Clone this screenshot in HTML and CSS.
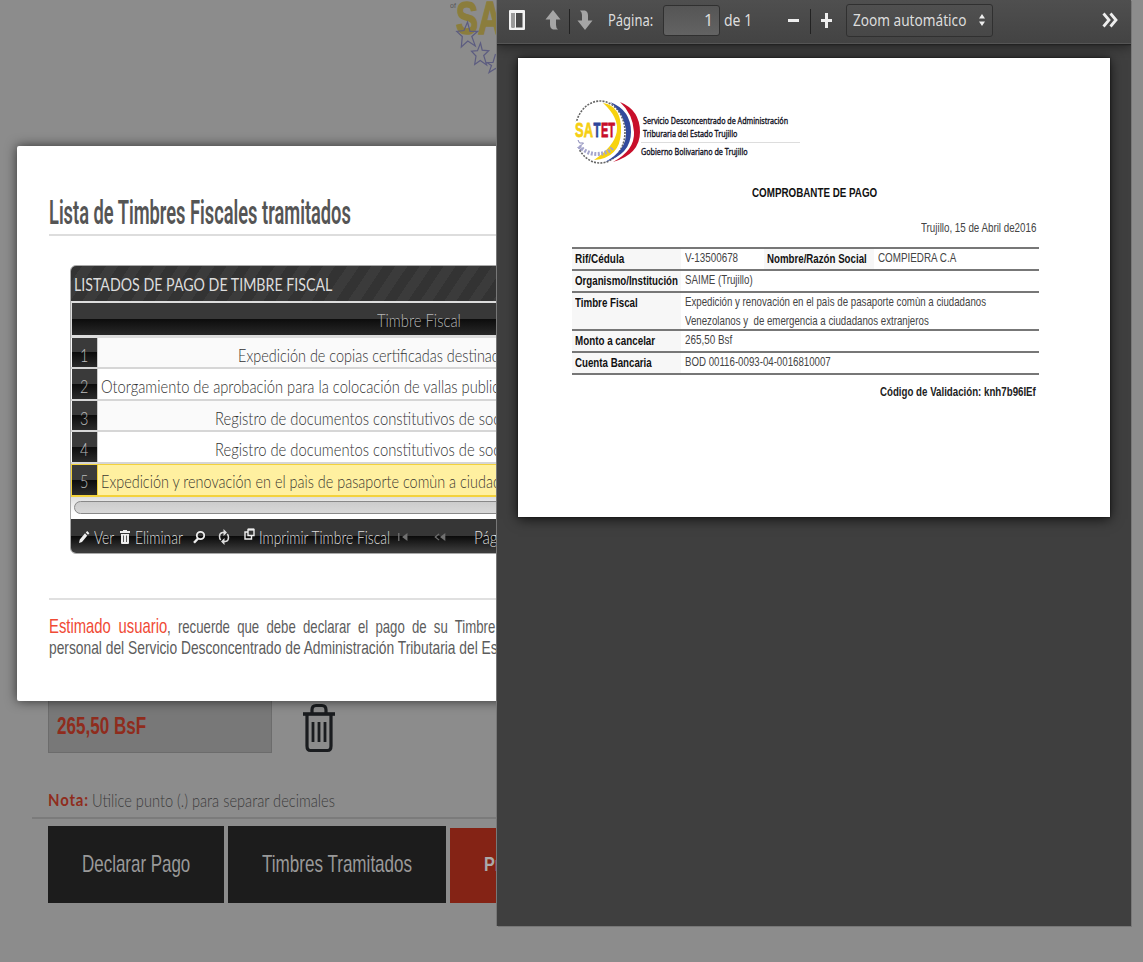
FILE: index.html
```html
<!DOCTYPE html>
<html lang="es">
<head>
<meta charset="utf-8">
<title>Timbres Fiscales</title>
<link rel="stylesheet" href="styles.css">
</head>
<body>
<div class="stage">
  <main class="page">
    <svg class="page-logo" viewBox="0 0 47 76" width="47" height="76">
      <text x="0" y="8" class="logo-tiny">of</text>
      <text x="6" y="34" class="logo-sa" textLength="46" lengthAdjust="spacingAndGlyphs">SA</text>
      <g fill="none" stroke="#5c5c80" stroke-width="1.2">
        <path d="M17.500 22l2.500 9.300h7.800l-6 5.200 3.500 9.500-7.500-5-6.500 6 1-10.500-5.500-5 7.200-1z"/>
        <path d="M30.500 43l1.700 7.200 6.500.6-5 4.700 3 9.500-6.500-4.500-5.500 4 1.300-8.500-4.500-4.800 6-.6z"/>
        <path d="M45.500 54l-2.500 8.500h-6l4.500 3-2.500 7 6.500-4 3 2"/>
      </g>
    </svg>
    <form class="form">
      <div class="amount-row">
        <div class="amount"><span class="fit" data-w="89">265,50 BsF</span></div>
        <svg class="trash" width="34" height="50" viewBox="0 0 34 50" fill="none" stroke="#1a1c1f">
          <path stroke-width="3.600" d="M1 11h32"/>
          <path stroke-width="3.200" d="M10 10V7q0-4.500 4-4.500h6q4 0 4 4.500v3M5 12v31q0 4.500 3.500 4.500h17q3.500 0 3.500-4.500V12"/>
          <path stroke-width="2.800" d="M11 19v20M17 19v20M23 19v20"/>
        </svg>
      </div>
      <p class="note"><b class="fit" data-w="41">Nota:</b><span class="fit" data-w="243">Utilice punto (.) para separar decimales</span></p>
      <div class="actions">
        <a class="btn btn-pago"><span class="fit" data-w="108">Declarar Pago</span></a>
        <a class="btn btn-timbres"><span class="fit" data-w="150">Timbres Tramitados</span></a>
        <a class="btn btn-red"><span class="fit" data-w="17">Pr</span></a>
      </div>
    </form>
  </main>

  <section class="modal">
    <h1><span class="fit" data-w="302">Lista de Timbres Fiscales tramitados</span></h1>
    <div class="grid">
      <div class="caption"><span class="fit" data-w="258">LISTADOS DE PAGO DE TIMBRE FISCAL</span></div>
      <div class="head"><span class="fit" data-w="84">Timbre Fiscal</span></div>
      <div class="rows">
        <div class="row odd"><div class="num"><span class="fit" data-w="8">1</span></div><div class="cell i1"><span class="fit" data-w="262">Expedición de copias certificadas destinad</span></div></div>
        <div class="row"><div class="num"><span class="fit" data-w="8">2</span></div><div class="cell"><span class="fit" data-w="398">Otorgamiento de aprobación para la colocación de vallas public</span></div></div>
        <div class="row odd"><div class="num"><span class="fit" data-w="8">3</span></div><div class="cell i3"><span class="fit" data-w="285">Registro de documentos constitutivos de soc</span></div></div>
        <div class="row"><div class="num"><span class="fit" data-w="8">4</span></div><div class="cell i3"><span class="fit" data-w="285">Registro de documentos constitutivos de soc</span></div></div>
        <div class="row selected"><div class="num"><span class="fit" data-w="8">5</span></div><div class="cell"><span class="fit" data-w="400">Expedición y renovación en el paìs de pasaporte comùn a ciudad</span></div></div>
      </div>
      <div class="scroll"><div class="thumb"></div></div>
      <div class="pager">
        <svg class="ic-edit" width="12" height="14" viewBox="0 0 12 14"><path fill="#eee" d="M1 13l.800-3.500L7 3.300l2.200 2.400L4 12zM7.800 2.400L9.200 1l2.200 2.300L10 4.800z"/></svg>
        <span class="fit" data-w="20">Ver</span>
        <svg class="ic-bin" width="10" height="14" viewBox="0 0 10 14"><path fill="#eee" d="M3 0h4v1h3v2H0V1h3zM1 4h8v9q0 1-1 1H2q-1 0-1-1z"/><path stroke="#333" stroke-width=".8" d="M3.500 5.500v6.500M6.500 5.500v6.500"/></svg>
        <span class="fit" data-w="48">Eliminar</span>
        <svg class="ic-find" width="12" height="14" viewBox="0 0 12 14" fill="none" stroke="#eee"><circle cx="7.500" cy="5.500" r="3.700" stroke-width="1.800"/><path stroke-width="2.400" d="M5 8.500L1 12.800"/></svg>
        <svg class="ic-sync" width="12" height="16" viewBox="0 0 12 16"><path fill="none" stroke="#ddd" stroke-width="1.500" d="M6 3.500H4.500Q1.500 4 1.500 7.500q0 2 1.200 3.500M6 12.500h1.500q3-.5 3-4 0-2-1.200-3.500"/><path fill="#ddd" d="M5.500 0l3.500 3.500-3.500 3.500zM6.500 9v7L3 12.500z"/></svg>
        <svg class="ic-copy" width="11" height="13" viewBox="0 0 11 13" fill="none" stroke="#eee" stroke-width="1.400"><path d="M4 1.500h6v6H4z M4 4H1v7h6.500V8"/><path d="M4 1.500h6" stroke-width="2"/></svg>
        <span class="fit" data-w="131">Imprimir Timbre Fiscal</span>
        <svg class="ic-first" width="10" height="8" viewBox="0 0 11 9"><path fill="#707070" d="M0 0h1.500v9H0zM10.500 0v9L4.500 4.500z"/></svg>
        <svg class="ic-prev" width="12" height="8" viewBox="0 0 13 9"><path fill="none" stroke="#707070" stroke-width="1.400" d="M5.500 1L1.200 4.500l4.300 3.500"/><path fill="#707070" d="M12.500 0v9L6.500 4.500z"/></svg>
        <span class="fit" data-w="27">Pági</span>
      </div>
    </div>
    <div class="advice">
      <p><span class="fit hl" data-w="118">Estimado usuario</span><span class="fit advice-first" data-w="328">, recuerde que debe declarar el pago de su Timbre</span></p>
      <p><span class="fit" data-w="449">personal del Servicio Desconcentrado de Administración Tributaria del Es</span></p>
    </div>
  </section>

  <section class="viewer">
    <header class="toolbar">
      <svg class="tb-side" width="16" height="20" viewBox="0 0 16 20"><path fill="#f2f2f2" fill-rule="evenodd" d="M1 0h14q1 0 1 1v18q0 1-1 1H1q-1 0-1-1V1q0-1 1-1zM2.500 3v14.500h3V3zM7 3v14.500h6.500V3z"/><path fill="#999" d="M2.500 3h3v14.500h-3z"/></svg>
      <svg class="tb-up" width="16" height="20" viewBox="0 0 16 20"><path fill="#a5a5a5" d="M8 0l7.500 9.500H11V15q0 3 2 4.500H8q-3-1-3-5v-5H.5z"/></svg>
      <i class="sep"></i>
      <svg class="tb-down" width="16" height="20" viewBox="0 0 16 20"><path fill="#a5a5a5" d="M8 20L.5 10.500H5V5q0-3-2-4.500h5q3 1 3 5v5h4.500z"/></svg>
      <span class="fit tb-label" data-w="45">Página:</span>
      <div class="page-input">1</div>
      <span class="fit tb-of" data-w="28">de 1</span>
      <i class="minus"></i>
      <i class="sep sep2"></i>
      <i class="plus"></i>
      <div class="select"><span class="fit" data-w="113">Zoom automático</span>
        <svg width="6" height="12" viewBox="0 0 6 12"><path fill="#eee" d="M3 0l3 4.500H0zM3 12l3-4.500H0z"/></svg>
      </div>
      <svg class="tb-more" width="16" height="16" viewBox="0 0 16 16" fill="none" stroke="#eee" stroke-width="2.800"><path d="M1.500 1.500L7 8l-5.500 6.500M8.500 1.500L14 8l-5.500 6.500"/></svg>
    </header>
    <article class="sheet">
      <div class="brand">
        <svg width="68" height="68" viewBox="0 0 68 68">
          <ellipse cx="27" cy="34" rx="25" ry="31" fill="none" stroke="#666" stroke-width="1.600" stroke-dasharray="2 1.200"/>
          <path fill="#fff" d="M0 24h44v17H0zM0 38h22v14H0z"/>
          <path fill="#f8d30f" d="M30 5Q62 34 21 62Q47 60 48 34T30 5z"/>
          <path fill="#324a9c" d="M37 4Q52 16 53 34T32 64Q58 56 58 34T37 4z"/>
          <path fill="#c80f2b" d="M47 4Q60 16 61 34T40 64Q67 56 67 34T47 4z"/>
          <g fill="none" stroke="#8585b5"><path d="M5 42l1.500 3h4l-3 3 1 4-4-2.500"/><path stroke-width="4" stroke-dasharray="2 1.500" stroke="#a5a5cc" d="M6 48q12 12 28 6q4-2 6-5"/></g>
          <g class="brand-name">
            <text x="2" y="39" fill="#f6cf12" stroke="#f6cf12" textLength="18" lengthAdjust="spacingAndGlyphs">SA</text>
            <text x="20.500" y="39" fill="#2e459a" stroke="#2e459a" textLength="7" lengthAdjust="spacingAndGlyphs">T</text>
            <text x="28" y="39" fill="#c80f2b" stroke="#c80f2b" textLength="14" lengthAdjust="spacingAndGlyphs">ET</text>
          </g>
        </svg>
        <div class="brand-text">
          <p><span class="fit" data-w="145">Servicio Desconcentrado de Administración</span></p>
          <p><span class="fit" data-w="94">Triburaria del Estado Trujillo</span></p>
          <p class="gov"><span class="fit" data-w="107">Gobierno Bolivariano de Trujillo</span></p>
        </div>
      </div>
      <h2><span class="fit" data-w="125">COMPROBANTE DE PAGO</span></h2>
      <p class="date"><span class="fit" data-w="115">Trujillo, 15 de Abril de2016</span></p>
      <div class="receipt">
        <div class="r"><b><span class="fit" data-w="49">Rif/Cédula</span></b><span class="v v-id"><span class="fit" data-w="53">V-13500678</span></span><b class="b2"><span class="fit" data-w="100">Nombre/Razón Social</span></b><span class="v"><span class="fit" data-w="78">COMPIEDRA C.A</span></span></div>
        <div class="r"><b><span class="fit" data-w="103">Organismo/Institución</span></b><span class="v"><span class="fit" data-w="68">SAIME (Trujillo)</span></span></div>
        <div class="r r-tall"><b><span class="fit" data-w="63">Timbre Fiscal</span></b><span class="v"><span class="fit" data-w="301">Expedición y renovación en el paìs de pasaporte comùn a ciudadanos</span><br><span class="fit" data-w="244">Venezolanos y&nbsp; de emergencia a ciudadanos extranjeros</span></span></div>
        <div class="r"><b><span class="fit" data-w="80">Monto a cancelar</span></b><span class="v"><span class="fit" data-w="47">265,50 Bsf</span></span></div>
        <div class="r"><b><span class="fit" data-w="77">Cuenta Bancaria</span></b><span class="v"><span class="fit" data-w="146">BOD 00116-0093-04-0016810007</span></span></div>
      </div>
      <p class="code"><span class="fit" data-w="156">Código de Validación: knh7b96IEf</span></p>
    </article>
  </section>
</div>
<script src="fit.js"></script>
</body>
</html>
```

FILE: styles.css
```css
* { box-sizing: border-box; }
body { margin: 0; background: #8c8c8c; font-family: "Liberation Sans", Arial, sans-serif; }
h1, h2, p { margin: 0; font-weight: normal; }
svg { display: block; flex: none; }
.stage { position: relative; width: 1143px; height: 962px; overflow: hidden; }
.fit { display: inline-block; white-space: nowrap; transform-origin: 0 50%; flex: none; }

/* dimmed page behind the dialog */
.page { width: 497px; height: 962px; overflow: hidden; }
.page-logo { margin-left: 450px; }
.logo-tiny { font-size: 7px; fill: #555; }
.logo-sa { font: bold 46px "Liberation Sans", sans-serif; fill: #8b7d3c; stroke: #8b7d3c; stroke-width: 1.500px; }
.form { padding: 614px 0 0 32px; }
.amount-row { display: flex; padding-left: 16px; gap: 30px; align-items: flex-end; }
.amount { width: 224px; height: 63px; border: 1px solid #6c6c6c; background: #787878; padding: 9px 0 0 8px; font-size: 23px; line-height: 52px; font-weight: bold; color: #8f2c1d; }
.note { display: flex; gap: 3px; height: 66px; padding: 35px 0 0 16px; border-bottom: 2px solid #7b7b7b; font: 300 18px/24px Lato, sans-serif; color: #3c3c3c; }
.note b { font-weight: 700; font-size: 17.500px; letter-spacing: 1px; color: #8f2c1d; }
.actions { display: flex; gap: 4px; padding: 7px 0 0 16px; align-items: flex-end; }
.btn { height: 77px; background: #1c1c1c; color: #999; font-size: 24px; line-height: 76px; flex: none; }
.btn-pago { width: 176px; padding-left: 34px; }
.btn-timbres { width: 218px; padding-left: 34px; }
.btn-red { width: 150px; height: 75px; line-height: 72px; padding-left: 34px; background: #842315; font-weight: bold; font-size: 21px; color: #aaa; }

/* dialog */
.modal { position: absolute; left: 17px; top: 146px; width: 560px; height: 555px; padding: 43px 0 0 32px; background: #fff; border-radius: 2px; box-shadow: 0 0 12px rgba(0,0,0,.65); }
.modal h1 { height: 47px; border-bottom: 2px solid #ddd; font: 600 34px/47px Roboto, sans-serif; color: #555; }
.grid { margin: 29px 0 0 21px; width: 520px; height: 289px; border: 1px solid #aaa; border-radius: 6px; overflow: hidden; font: 300 18px/30px Lato, sans-serif; background: #ddd; }
.caption { height: 35px; padding: 2px 0 0 3px; line-height: 34px; font-size: 17px; font-weight: 400; color: #ddd; background: repeating-linear-gradient(-56deg, #333 0 10px, #3b3b3b 10px 20px); }
.head { height: 32px; margin: 2px 0 0 1px; padding-left: 305px; line-height: 34px; color: #b5b5b5; background: linear-gradient(#383838 0 50%, #0c0c0c 50%, #282828); }
.rows { margin-top: 3px; }
.row { display: flex; height: 31.400px; border-bottom: 2px solid #d6d6d6; background: #fff; color: #333; }
.row.odd { background: #fafafa; }
.num { flex: none; width: 26px; margin-left: 1px; padding-left: 8px; color: #bbb; background: linear-gradient(#3a3a3a 0 50%, #0c0c0c 50%, #2b2b2b); border-right: 1px solid #ccc; line-height: 34px; }
.cell { padding-left: 3px; line-height: 34px; }
.cell.i1 { padding-left: 140px; }
.cell.i3 { padding-left: 117px; }
.row.selected { height: 33px; background: #fff0a0; border: 1px solid #f3d23c; border-bottom-width: 2px; color: #3c3830; }
.row.selected .num { margin-left: 0; border-color: #f3d23c; line-height: 33px; }
.row.selected .cell { line-height: 33px; }
.scroll { height: 22px; padding: 4px 0 0 3px; background: linear-gradient(#dedede, #fff 70%); }
.thumb { width: 510px; height: 13px; border: 1px solid #888; border-radius: 7px; background: linear-gradient(#ccc, #d8d8d8); }
.pager { display: flex; align-items: center; height: 34px; padding: 2px 0 0 7px; color: #ddd; background: linear-gradient(#363636 0 50%, #0a0a0a 50%, #3b3b3b 95%); line-height: 34px; }
.ic-bin { margin: 0 5px 0 6px; }
.pager .ic-edit { margin-right: 4px; }
.ic-find { margin-left: 10px; }
.ic-sync { margin-left: 13px; }
.ic-copy { margin: 0 4px 4px 14px; }
.ic-first { margin-left: 8px; }
.ic-prev { margin: 0 28px 0 26px; }
.advice { margin-top: 44px; padding-top: 15px; border-top: 2px solid #e0e0e0; font-size: 18.500px; line-height: 22px; color: #5c5c5c; }
.advice p { display: flex; height: 22px; align-items: baseline; }
.hl { font-size: 21px; word-spacing: 5px; color: #f04a35; }
.advice-first { word-spacing: 5px; }

/* document viewer */
.viewer { position: absolute; left: 497px; top: 0; width: 634px; height: 926px; background: #3f3f3f; box-shadow: -1px 0 #777, 1px 1px #777; }
.toolbar { display: flex; height: 44px; padding: 0 13px 3px 12px; align-items: center; background: linear-gradient(#4f4f4f, #434343); border-bottom: 1px solid #555; box-shadow: 0 1px 1px #222, 0 3px 10px rgba(0,0,0,.4); font: 17px/24px "Noto Sans", sans-serif; color: #ddd; clip-path: inset(0 0 -14px 0); }
.tb-up { margin-left: 20px; }
.sep { width: 1px; height: 25px; margin: 2px 7px 0 8px; background: #222; }
.tb-label { margin-left: 15px; }
.page-input { width: 57px; height: 31px; margin: 0 4px 0 10px; padding: 0 6px 0 0; border: 1px solid #303030; border-radius: 3px; background: linear-gradient(#555, #636363); text-align: right; line-height: 28px; font-size: 16px; }
.minus { width: 11px; height: 3px; margin-left: 36px; background: #eee; }
.sep2 { margin: 2px 10px 0 11px; }
.plus { width: 11px; height: 15px; background: linear-gradient(#eee, #eee) 50% 50% / 3px 15px no-repeat, linear-gradient(#eee, #eee) 50% 50% / 11px 3px no-repeat; }
.select { display: flex; width: 147px; height: 33px; margin: 0 0 0 14px; padding: 0 7px 0 6px; align-items: center; justify-content: space-between; border: 1px solid #303030; border-radius: 3px; background: linear-gradient(#505050, #474747); }
.tb-more { margin-left: auto; }
.sheet { width: 592px; height: 459px; margin: 14px 0 0 21px; padding: 40px 71px 0 55px; background: #fff; box-shadow: 0 0 2px #111, 0 2px 12px rgba(0,0,0,.75); font-size: 13px; color: #444; }
.brand { display: flex; }
.brand-name { font: bold 21px "Liberation Sans", sans-serif; stroke-width: .800px; }
.brand-text { width: 159px; padding: 16px 0 0 2px; font: 700 9px/13px "Noto Sans", sans-serif; color: #112; -webkit-text-stroke: .35px #112; }
.brand-text p { height: 13px; }
.brand-text .gov { margin: 2px 0 0 -2px; padding-top: 2px; border-top: 1px solid #ddd; }
.sheet h2 { margin: 17px 0 0 179px; height: 20px; font-weight: bold; font-size: 13.500px; line-height: 20px; color: #111; }
.date, .code { display: flex; justify-content: flex-end; padding-right: 3px; }
.date { margin-top: 15px; line-height: 19px; height: 29px; }
.receipt { width: 467px; margin-left: -1px; border-top: 2px solid #777; }
.r { display: flex; height: 22px; border-bottom: 2px solid #777; line-height: 20px; }
.r b { width: 109px; padding-left: 3px; background: #f7f7f7; color: #111; flex: none; }
.r .b2 { width: 110px; }
.v { padding-left: 4px; line-height: 18.500px; }
.v-id { width: 83px; }
.r-tall { height: 38px; }
.code { margin-top: 7px; font-weight: bold; line-height: 19px; color: #222; }
```

FILE: fit.js
```js
// Condense each label horizontally to the width given in data-w.
document.querySelectorAll('.fit').forEach(function (el) {
  var target = parseFloat(el.dataset.w);
  var natural = el.offsetWidth;
  el.style.transform = 'scaleX(' + target / natural + ')';
  el.style.marginRight = (target - natural) + 'px';
});
```
